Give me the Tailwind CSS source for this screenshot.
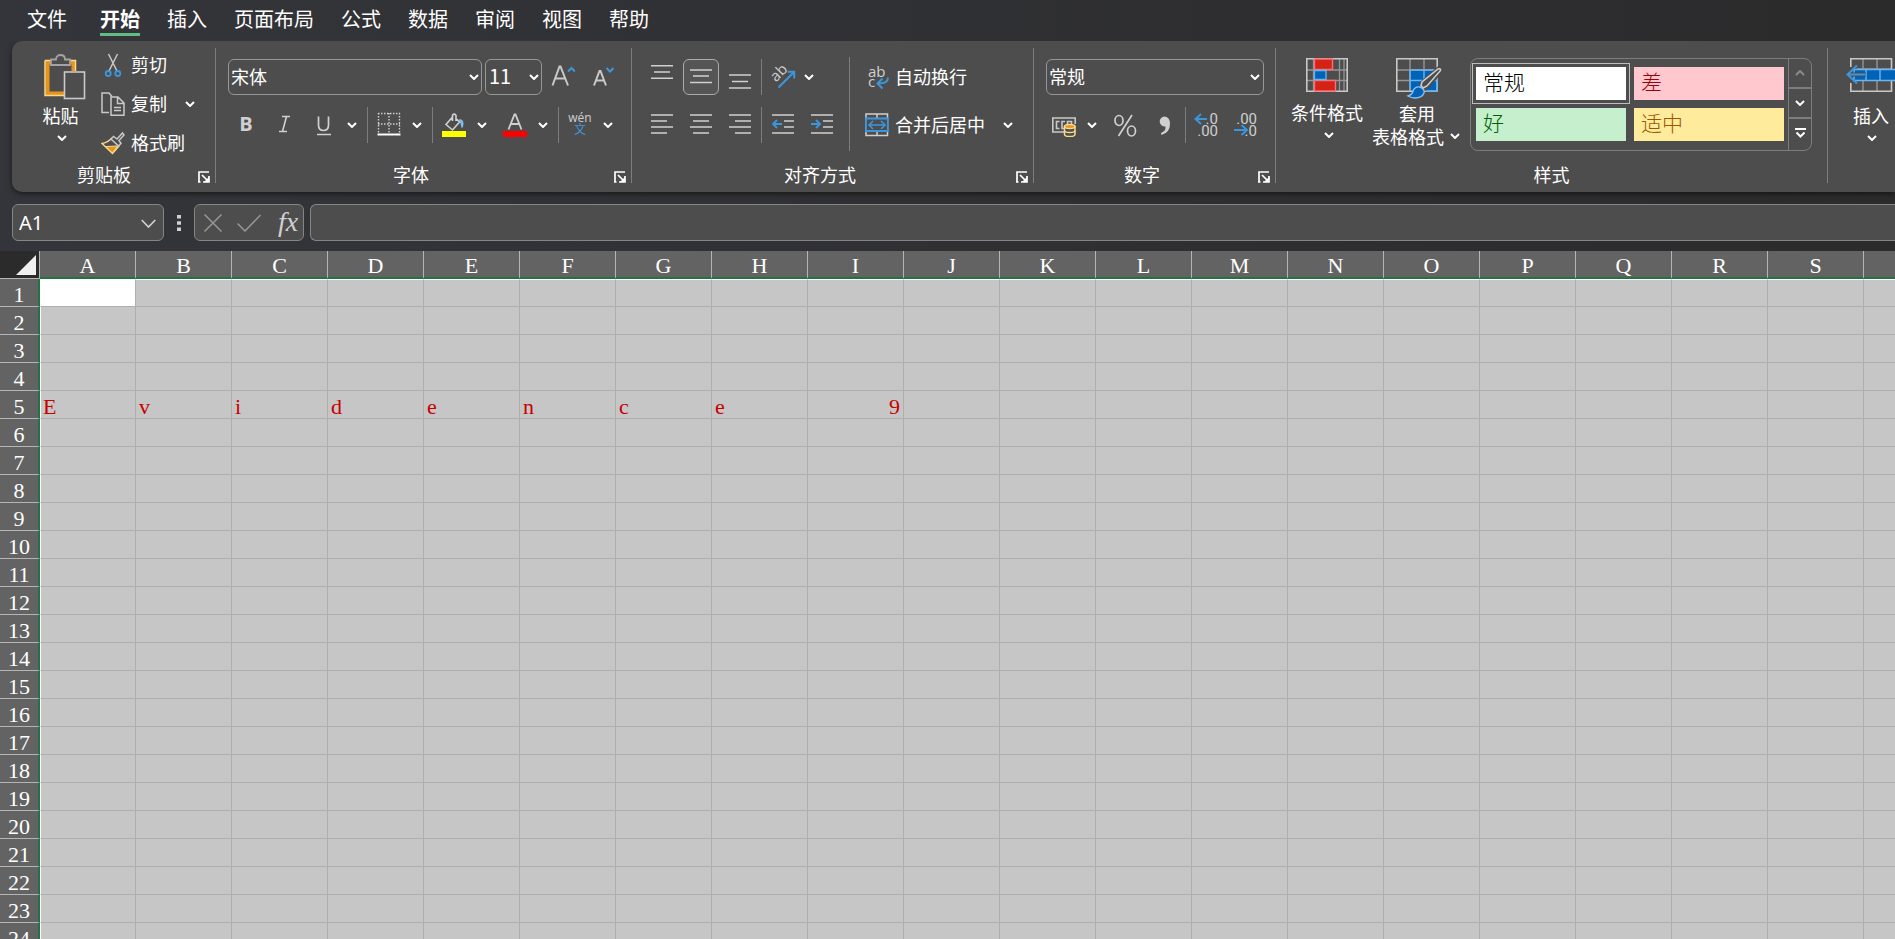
<!DOCTYPE html>
<html lang="zh-CN">
<head>
<meta charset="utf-8">
<title>工作簿</title>
<script src="https://cdn.jsdelivr.net/npm/@tailwindcss/browser@4"></script>
</head>
<body class="h-screen overflow-hidden flex flex-col bg-linear-to-r from-[#34353a] to-[#2b2b2c] text-white text-lg font-['Noto_Sans_CJK_SC',sans-serif]">
<svg class="hidden" aria-hidden="true">
  <symbol id="chev" viewBox="0 0 10 6"><path d="M1 1l4 4 4-4" fill="none" stroke="currentColor" stroke-width="2"/></symbol>
  <symbol id="launch" viewBox="0 0 12 12"><path d="M1 11.5V1H11M0 11h2.500M4 4l6 6M11 5v6H5" fill="none" stroke="#fff" stroke-width="1.700"/><path d="M11 6v5H6z" fill="#fff"/></symbol>
</svg>

<nav class="h-[41px] shrink-0 flex items-start pl-[27px] pt-1 gap-[27px] text-xl leading-[29px] whitespace-nowrap" aria-label="功能区选项卡">
  <a href="#" class="mr-1.5">文件</a>
  <a href="#" class="font-bold h-8 border-b-3 border-[#62bd85]">开始</a>
  <a href="#">插入</a>
  <a href="#">页面布局</a>
  <a href="#">公式</a>
  <a href="#">数据</a>
  <a href="#">审阅</a>
  <a href="#">视图</a>
  <a href="#">帮助</a>
</nav>

<main class="flex flex-col flex-1 min-h-0 overflow-hidden">
<section class="ml-3 shrink-0 flex pt-[7px] pb-[9px] bg-[#4d4d4d] rounded-l-[10px] shadow-[0_2px_5px_rgba(0,0,0,0.5)] whitespace-nowrap leading-[22px]" aria-label="开始">

  <div class="w-[204px] h-[135px] shrink-0 flex flex-col border-r border-[#7d7d7d]">
    <div class="flex-1 flex">
      <button class="w-[65px] ml-4 pt-[6px] mr-2 flex flex-col items-center">
        <svg class="w-[42px] h-[46px] ml-[9px]" viewBox="0 0 42 46" fill="none">
          <path d="M7 8.500H3.500V39.500H20M27 8.500h2.500V17" stroke="#e8931c" stroke-width="4" />
          <path d="M1 6.500V41.500H20M1 6.500H7M26 6.500h5.500V17" stroke="#f9d98c" stroke-width="1.500"/>
          <path d="M7 11V5.500h5C12 2.500 14 1 16.500 1S21 2.500 21 5.500h5V11z" fill="#4d4d4d" stroke="#a3a3a3" stroke-width="1.800"/>
          <rect x="20.500" y="18" width="20" height="26.500" fill="#4d4d4d" stroke="#c9c9c9" stroke-width="1.600"/>
        </svg>
        <span class="mt-1">粘贴</span>
        <svg class="w-2.5 h-1.5 mt-[9px] ml-0.5"><use href="#chev"/></svg>
      </button>
      <div class="flex flex-col gap-[6px]">
        <button class="h-[33px] flex items-center gap-[6px]">
          <svg class="w-6 h-6" viewBox="0 0 24 24" fill="none"><path d="M7.500 1L16 18M16.500 1L8 18" stroke="#c9c9c9" stroke-width="1.500"/><circle cx="7.200" cy="20.500" r="2.500" stroke="#3c96dc" stroke-width="1.800"/><circle cx="16.800" cy="20.500" r="2.500" stroke="#3c96dc" stroke-width="1.800"/></svg>
          <span class="pb-[2px]">剪切</span>
        </button>
        <div class="h-[33px] flex items-center">
          <button class="flex items-center gap-[6px]">
            <svg class="w-6 h-6" viewBox="0 0 24 24" fill="none" stroke="#c9c9c9" stroke-width="1.500"><path d="M8 20.500H1V1h7l3 3.500"/><path d="M10 5h7l6 6v12.200H10zM16.500 5v6.500H23M13 15.500h7M13 18.500h7"/></svg>
            <span class="pb-[2px]">复制</span>
          </button>
          <button class="w-5 h-6 ml-[13px] flex items-center justify-center" aria-label="复制选项"><svg class="w-2.5 h-1.5"><use href="#chev"/></svg></button>
        </div>
        <button class="h-[33px] flex items-center gap-[6px]">
          <svg class="w-6 h-6" viewBox="0 0 24 24" fill="none"><path d="M1 12.500C5 12 8 10 10.500 7.500L18 15l-6.500 7.500z" stroke="#f9d98c" stroke-width="1.400"/><path d="M5 15.500l11.500-.5-5 7z" fill="#e8931c" stroke="#f9d98c"/><path d="M10 8l2.500-2.500 3.500 2.500L21.500 2l1.500 2-5 5.500 2 3-2.500 2.500z" fill="#4d4d4d" stroke="#c9c9c9" stroke-width="1.500"/></svg>
          <span class="pb-[2px]">格式刷</span>
        </button>
      </div>
    </div>
    <div class="h-4 flex items-end"><h2 class="flex-1 pl-[6px] pb-[2px] text-center leading-[14px]">剪贴板</h2><button class="ml-2 mr-[5px]" aria-label="剪贴板设置"><svg class="size-3"><use href="#launch"/></svg></button></div>
  </div>

  <div class="w-[416px] h-[135px] shrink-0 flex flex-col border-r border-[#7d7d7d]">
    <div class="flex-1 flex flex-col gap-3 pt-[11px] pl-3">
      <div class="flex h-9">
        <label class="relative mr-[3px]"><select aria-label="字体" class="appearance-none w-[254px] h-9 border border-[#979797] rounded-md pl-[2px] pb-[2px] leading-8"><option>宋体</option></select><svg class="absolute right-[3px] top-[15px] w-2.5 h-1.5"><use href="#chev"/></svg></label>
        <label class="relative"><select aria-label="字号" class="appearance-none w-[57px] h-9 border border-[#979797] rounded-md pl-[3px] pb-[2px] text-xl leading-8"><option>11</option></select><svg class="absolute right-[3px] top-[15px] w-2.5 h-1.5"><use href="#chev"/></svg></label>
        <button class="w-9 ml-[3px] pb-[3px] flex items-center justify-center" aria-label="增大字号"><svg class="size-6" viewBox="0 0 24 24" fill="none"><path d="M1.500 21.500L8.500 2.500h1L17 21.500M4 14.500h10.500" stroke="#c9c9c9" stroke-width="2"/><path d="M17 7.500l3.500-3.500L24 7.500" stroke="#3c96dc" stroke-width="2"/></svg></button>
        <button class="w-9 ml-[3px] pb-[3px] flex items-center justify-center" aria-label="减小字号"><svg class="size-6" viewBox="0 0 24 24" fill="none"><path d="M4 21.500L9.500 7h1L16 21.500M6 16.500h8" stroke="#c9c9c9" stroke-width="2"/><path d="M16.500 4l3.500 3.500L23.500 4" stroke="#3c96dc" stroke-width="2"/></svg></button>
      </div>
      <div class="flex h-9 items-center text-[#d0d0d0]">
        <button class="w-9 mr-[3px] pb-[3px] text-xl font-bold font-['Open_Sans',sans-serif]" aria-label="加粗">B</button>
        <button class="w-9 mr-[3px] pb-[2px]" aria-label="倾斜"><svg class="size-6 mx-auto" viewBox="0 0 24 24"><path d="M9 4.500h8M6 19.500h8M13.500 4.500l-4 15" fill="none" stroke="#d0d0d0" stroke-width="1.600"/></svg></button>
        <button class="w-9" aria-label="下划线"><svg class="size-6 mx-auto" viewBox="0 0 24 24"><path d="M6.500 3.500v8.500q0 5.500 5 5.500t5-5.500V3.500M5 21.500h14" fill="none" stroke="#d0d0d0" stroke-width="1.700"/></svg></button>
        <button class="w-5 h-9 flex items-center justify-center text-white" aria-label="下划线选项"><svg class="w-2.5 h-1.5"><use href="#chev"/></svg></button>
        <span class="ml-[5px] mr-[3px] w-px h-9 bg-[#7d7d7d]"></span>
        <button class="w-9 pb-[2px]" aria-label="边框"><svg class="size-6 mx-auto" viewBox="0 0 24 24" fill="none"><path d="M1 1.500H23M1 12H23M1.500 1V21M12 1V21M22.500 1V21" stroke="#d0d0d0" stroke-width="1.400" stroke-dasharray="1.500 1.500"/><path d="M.5 22.500h23" stroke="#fff" stroke-width="2"/></svg></button>
        <button class="w-5 h-9 flex items-center justify-center text-white" aria-label="边框选项"><svg class="w-2.5 h-1.5"><use href="#chev"/></svg></button>
        <span class="ml-[5px] mr-[3px] w-px h-9 bg-[#7d7d7d]"></span>
        <button class="w-9" aria-label="填充颜色"><svg class="size-6 mx-auto" viewBox="0 0 24 24" fill="none"><path d="M10.500 4L4 11.500l6.500 5.500 7-8-4-4M10.500 4v-2q2-2 3.500.5V8M10.500 4v4" stroke="#d0d0d0" stroke-width="1.600"/><path d="M16.500 6.500q4.500-1 5 3.500.3 3-1.500 5.500-1.500-3-1.500-5z" fill="#7fb8ea"/><path d="M0 18h24v6H0z" fill="#ff0"/></svg></button>
        <button class="w-5 h-9 flex items-center justify-center text-white" aria-label="填充颜色选项"><svg class="w-2.5 h-1.5"><use href="#chev"/></svg></button>
        <button class="w-9 ml-[5px]" aria-label="字体颜色"><svg class="size-6 mx-auto" viewBox="0 0 24 24" fill="none"><path d="M5.500 16.500L11.500 1.500h1L18.500 16.500M8 11h8.500" stroke="#d0d0d0" stroke-width="1.800"/><path d="M0 18h24v6H0z" fill="red"/></svg></button>
        <button class="w-5 h-9 flex items-center justify-center text-white" aria-label="字体颜色选项"><svg class="w-2.5 h-1.5"><use href="#chev"/></svg></button>
        <span class="ml-[5px] mr-[3px] w-px h-9 bg-[#7d7d7d]"></span>
        <button class="w-9 pb-[2px] flex flex-col items-center text-xs leading-3 font-['Open_Sans','Noto_Sans_CJK_SC',sans-serif]"><span>wén</span><span class="text-[#3c96dc]">文</span></button>
        <button class="w-5 h-9 flex items-center justify-center text-white" aria-label="拼音选项"><svg class="w-2.5 h-1.5"><use href="#chev"/></svg></button>
      </div>
    </div>
    <div class="h-4 flex items-end"><h2 class="flex-1 pb-[2px] text-center leading-[14px]">字体</h2><button class="ml-2 mr-[5px]" aria-label="字体设置"><svg class="size-3"><use href="#launch"/></svg></button></div>
  </div>

  <div class="w-[402px] h-[135px] shrink-0 flex flex-col border-r border-[#7d7d7d]">
    <div class="flex-1 flex pl-3">
      <div class="w-[205px] flex flex-col gap-3 pt-[11px]">
        <div class="flex h-9 items-center gap-[3px]">
          <button class="w-9" aria-label="顶端对齐"><svg class="w-[22px] h-6 mx-auto" viewBox="0 0 22 24"><path d="M0 .8h22M3 7h16M0 13.200h22" stroke="#d0d0d0" stroke-width="1.600"/></svg></button>
          <button class="w-9 h-9 border border-[#ababab] rounded-md bg-[#555]" aria-label="垂直居中" aria-pressed="true"><svg class="w-[22px] h-6 mx-auto" viewBox="0 0 22 24"><path d="M0 5h22M3 11h16M0 17.500h22" stroke="#d0d0d0" stroke-width="1.600"/></svg></button>
          <button class="w-9" aria-label="底端对齐"><svg class="w-[22px] h-6 mx-auto" viewBox="0 0 22 24"><path d="M0 10h22M3 16.500h16M0 23h22" stroke="#d0d0d0" stroke-width="1.600"/></svg></button>
          <span class="w-px h-9 bg-[#7d7d7d]"></span>
          <button class="w-9" aria-label="方向"><svg class="size-6 mx-auto overflow-visible" viewBox="0 0 24 24" fill="none"><text transform="translate(5 17.500) rotate(-45)" font-family="Open Sans" font-size="15" fill="#d0d0d0">ab</text><path d="M7.500 22.500L23 7M16.500 6.800H23.200V13.500" stroke="#3c96dc" stroke-width="2"/></svg></button>
          <button class="w-3 h-9 flex items-center" aria-label="方向选项"><svg class="w-2.5 h-1.5"><use href="#chev"/></svg></button>
        </div>
        <div class="flex h-9 items-center gap-[3px]">
          <button class="w-9 pb-[2px]" aria-label="左对齐"><svg class="w-[22px] h-6 mx-auto" viewBox="0 0 22 24"><path d="M0 3h22M0 9h16M0 15h22M0 21h16" stroke="#d0d0d0" stroke-width="1.600"/></svg></button>
          <button class="w-9 pb-[2px]" aria-label="居中"><svg class="w-[22px] h-6 mx-auto" viewBox="0 0 22 24"><path d="M0 3h22M3 9h16M0 15h22M3 21h16" stroke="#d0d0d0" stroke-width="1.600"/></svg></button>
          <button class="w-9 pb-[2px]" aria-label="右对齐"><svg class="w-[22px] h-6 mx-auto" viewBox="0 0 22 24"><path d="M0 3h22M6 9h16M0 15h22M6 21h16" stroke="#d0d0d0" stroke-width="1.600"/></svg></button>
          <span class="w-px h-9 bg-[#7d7d7d]"></span>
          <button class="w-9 pb-[2px]" aria-label="减少缩进"><svg class="w-[22px] h-6 mx-auto" viewBox="0 0 22 24" fill="none"><path d="M0 3h22M12 9h10M12 15h10M0 21h22" stroke="#d0d0d0" stroke-width="1.600"/><path d="M10 12H1M5 8l-4 4 4 4" stroke="#3c96dc" stroke-width="1.900"/></svg></button>
          <button class="w-9 pb-[2px]" aria-label="增加缩进"><svg class="w-[22px] h-6 mx-auto" viewBox="0 0 22 24" fill="none"><path d="M0 3h22M12 9h10M12 15h10M0 21h22" stroke="#d0d0d0" stroke-width="1.600"/><path d="M0 12h9M5 8l4 4-4 4" stroke="#3c96dc" stroke-width="1.900"/></svg></button>
        </div>
      </div>
      <span class="w-px h-[94px] mt-[9px] bg-[#7d7d7d]"></span>
      <div class="flex flex-col gap-3 pt-[11px] pl-[15px]">
        <button class="flex h-9 items-center gap-[6px]">
          <svg class="size-6 overflow-visible" viewBox="0 0 24 24" fill="none"><text x="3" y="11.500" font-family="Open Sans" font-size="15" fill="#d0d0d0">ab</text><text x="3" y="22" font-family="Open Sans" font-size="15" fill="#d0d0d0">c</text><path d="M23 12.500q0 6-9.500 6M17.500 13.500l-5 5 5 5" stroke="#3c96dc" stroke-width="2"/></svg>
          <span class="pb-[2px]">自动换行</span>
        </button>
        <div class="flex h-9 items-center">
          <button class="flex items-center gap-[6px]">
            <svg class="size-6" viewBox="0 0 24 24" fill="none"><path d="M1 1H22.500V22.500H1zM12 1v5M12 18v5" stroke="#d0d0d0" stroke-width="1.500"/><path d="M1 5.500H22.800V18H1z" fill="#4d4d4d" stroke="#3c96dc" stroke-width="1.800"/><path d="M4 12h16M8 8l-4 4 4 4M16 8l4 4-4 4" stroke="#3c96dc" stroke-width="1.600"/></svg>
            <span class="pb-[2px]">合并后居中</span>
          </button>
          <button class="w-5 h-9 ml-[13px] flex items-center justify-center" aria-label="合并选项"><svg class="w-2.5 h-1.5"><use href="#chev"/></svg></button>
        </div>
      </div>
    </div>
    <div class="h-4 flex items-end"><h2 class="flex-1 pb-[2px] text-center leading-[14px]">对齐方式</h2><button class="ml-2 mr-[5px]" aria-label="对齐设置"><svg class="size-3"><use href="#launch"/></svg></button></div>
  </div>

  <div class="w-[242px] h-[135px] shrink-0 flex flex-col border-r border-[#7d7d7d]">
    <div class="flex-1 flex flex-col gap-3 pt-[11px] pl-3">
      <label class="relative w-[218px] h-9"><select aria-label="数字格式" class="appearance-none w-full h-9 border border-[#979797] rounded-md pl-[2px] pb-[2px] leading-8"><option>常规</option></select><svg class="absolute right-1 top-[15px] w-2.5 h-1.5"><use href="#chev"/></svg></label>
      <div class="flex h-9 items-center">
        <button class="w-9" aria-label="会计数字格式"><svg class="size-6 mx-auto" viewBox="0 0 24 24" fill="none"><path d="M12 19H.8V5H23.200v6" stroke="#c9c9c9" stroke-width="1.600"/><path d="M7.500 8.500H4.500v7h3M13 8.500h-3v7h2M15.500 12V8.500h4V11" stroke="#c9c9c9" stroke-width="1.600"/><path d="M12.500 13.500v8q0 2 5.200 2t5.300-2v-8z" fill="#4d4d4d" stroke="#f9d98c" stroke-width="1.500"/><path d="M12.500 17.500q0 2 5.200 2t5.300-2" stroke="#f9d98c" stroke-width="1.500"/><ellipse cx="17.750" cy="13.500" rx="5.250" ry="2" fill="#e8931c" stroke="#f9d98c" stroke-width="1.400"/></svg></button>
        <button class="w-5 h-9 flex items-center justify-center" aria-label="会计格式选项"><svg class="w-2.5 h-1.5"><use href="#chev"/></svg></button>
        <button class="w-9 ml-[5px]" aria-label="百分比"><svg class="size-6 mx-auto" viewBox="0 0 24 24" fill="none" stroke="#d0d0d0" stroke-width="1.700"><ellipse cx="6" cy="7.500" rx="4" ry="5"/><ellipse cx="18.500" cy="18" rx="4" ry="5"/><path d="M19 2L5.500 23"/></svg></button>
        <button class="w-9 ml-[3px]" aria-label="千位分隔"><svg class="size-6 mx-auto" viewBox="0 0 24 24"><path d="M12 3.500q6 0 6 7.500 0 8.500-8.500 11l-.5-2q5-2 4.500-6.500a5 5 0 1 1-1.500-10z" fill="#d0d0d0"/></svg></button>
        <span class="mx-[3px] w-px h-9 bg-[#7d7d7d]"></span>
        <button class="w-9 pb-[2px]" aria-label="增加小数位数"><svg class="size-6 mx-auto overflow-visible" viewBox="0 0 24 24" fill="none"><g font-family="Roboto" font-size="15" fill="#d0d0d0"><text x="23" y="11.500" text-anchor="end">.0</text><text x="23" y="23.500" text-anchor="end">.00</text></g><path d="M12 7H.5M6 2L.5 7l5.500 5" stroke="#3c96dc" stroke-width="1.900"/></svg></button>
        <button class="w-9 ml-[3px] pb-[2px]" aria-label="减少小数位数"><svg class="size-6 mx-auto overflow-visible" viewBox="0 0 24 24" fill="none"><g font-family="Roboto" font-size="15" fill="#d0d0d0"><text x="23" y="11.500" text-anchor="end">.00</text><text x="23" y="23.500" text-anchor="end">.0</text></g><path d="M0 18H12.500M7.500 13l5.500 5-5.500 5" stroke="#3c96dc" stroke-width="1.900"/></svg></button>
      </div>
    </div>
    <div class="h-4 flex items-end"><h2 class="flex-1 pb-[2px] text-center leading-[14px]">数字</h2><button class="ml-2 mr-[5px]" aria-label="数字设置"><svg class="size-3"><use href="#launch"/></svg></button></div>
  </div>

  <div class="w-[552px] h-[135px] shrink-0 flex flex-col border-r border-[#7d7d7d]">
    <div class="flex-1 flex pt-[10px]">
      <button class="w-[72px] ml-[15px] flex flex-col items-center self-start">
        <svg class="w-[42px] h-[34px]" viewBox="0 0 42 34" fill="none"><path d="M7.500 1v32M33.500 1v32M38 1v32M1 12h40M1 22.500h40" stroke="#959595" stroke-width="1.300"/><path d="M.8.800H41.200V33.200H.8z" stroke="#c9c9c9" stroke-width="1.600"/><path d="M8.500 1H26.500V11.500H8.500zM8.500 22.500H29.500V33H8.500z" fill="#d42314" stroke="#f4707a" stroke-width="1.400"/><path d="M8.500 12.500H20V21.500H8.500z" fill="#0063b8" stroke="#6fb3ee" stroke-width="1.300"/></svg>
        <span class="mt-[9px]">条件格式</span>
        <svg class="w-2.5 h-1.5 mt-[9px] ml-1"><use href="#chev"/></svg>
      </button>
      <button class="ml-[9px] w-[89px] flex flex-col items-start self-start">
        <svg class="w-[46px] h-[41px] ml-6" viewBox="0 0 46 41" fill="none"><path d="M14 12H41V33H14z" fill="#0063b8"/><path d="M14 1v32M28 1v11M1 12h40M1 22.500h13" stroke="#959595" stroke-width="1.400"/><path d="M.8.800H41.200V33.200H.8z" stroke="#c9c9c9" stroke-width="1.600"/><path d="M14 33V12h27.200v21.200H30M28 12v12M14 22.500h27" stroke="#6fb3ee" stroke-width="1.400"/><path d="M43 10q3 0 2 3L31 29q-3 4-6 1-1-3 2-6z" fill="#4d4d4d" stroke="#4d4d4d" stroke-width="4"/><path d="M42 11q3-1 2.500 1.500L31 28l-4 2-2-2.500 1-3.500z" fill="#4d4d4d" stroke="#d0d0d0" stroke-width="1.500"/><path d="M12 38q4-1 5-5 2-5 7-4 5 2 4 6-2 5-9 5-4 0-7-2z" fill="#0063b8" stroke="#8cc2ee" stroke-width="1.400"/></svg>
        <span class="ml-[27px] mt-[3px]">套用</span>
        <span class="flex items-center gap-[6px] leading-6">表格格式<svg class="w-2.5 h-1.5"><use href="#chev"/></svg></span>
      </button>
      <div class="ml-[9px] w-[342px] h-[93px] flex border border-[#7d7d7d] rounded-lg" aria-label="单元格样式">
        <div class="grid grid-cols-[150px_150px] grid-rows-[33px_33px] gap-2 pl-[5px] pr-1 pt-2 text-[21px] leading-7 font-light text-left">
          <button class="bg-white text-black pl-[7px] pb-[5px] text-left outline-1 outline-offset-3 outline-[#bdbdbd]">常规</button>
          <button class="bg-[#ffc7ce] text-[#9c0006] pl-[7px] pb-[5px] text-left">差</button>
          <button class="bg-[#c6efce] text-[#006100] pl-[7px] pb-[5px] text-left">好</button>
          <button class="bg-[#ffeb9c] text-[#9c5700] pl-[7px] pb-[5px] text-left">适中</button>
        </div>
        <div class="flex-1 flex flex-col border-l border-[#7d7d7d]">
          <button class="flex-1 flex items-center justify-center text-[#8a8a8a] border-b-2 border-[#7d7d7d]" aria-label="上一行"><svg class="w-2.5 h-1.5 rotate-180"><use href="#chev"/></svg></button>
          <button class="flex-1 flex items-center justify-center border-b-2 border-[#7d7d7d]" aria-label="下一行"><svg class="w-2.5 h-1.5"><use href="#chev"/></svg></button>
          <button class="flex-1 pb-[3px] flex items-center justify-center" aria-label="更多样式"><svg class="w-[11px] h-[10px]" viewBox="0 0 11 10"><path d="M0 1h11M1.500 4.500l4 4 4-4" fill="none" stroke="#fff" stroke-width="2"/></svg></button>
        </div>
      </div>
    </div>
    <div class="h-4"><h2 class="text-center leading-[14px]">样式</h2></div>
  </div>

  <div class="flex-1 min-w-0 h-[135px] overflow-hidden">
    <button class="w-[86px] pt-[10px] flex flex-col items-center">
      <svg class="w-[50px] h-[34px]" viewBox="0 0 50 34" fill="none"><path d="M17 1v32M31 1v32M3 11h42" stroke="#959595" stroke-width="1.400"/><path d="M4.800.800H45.500V33.200H4.800z" stroke="#c9c9c9" stroke-width="1.600"/><path d="M3 9h8v16H3z" fill="#4d4d4d"/><path d="M8 11.500H50V22.500H8z" fill="#0063b8" stroke="#6fb3ee" stroke-width="1.400"/><path d="M20 11v11M34 11v11" stroke="#6fb3ee" stroke-width="1.400"/><path d="M20 16.500H3" stroke="#4d4d4d" stroke-width="4"/><path d="M20 16.500H2M11 7.500l-9.500 9L11 25.500" stroke="#3c96dc" stroke-width="2"/></svg>
      <span class="mt-3">插入</span>
      <svg class="w-2.5 h-1.5 mt-[9px] ml-0.5"><use href="#chev"/></svg>
    </button>
  </div>
</section>

<section class="shrink-0 flex items-center pl-3 pt-3 pb-[10px]" aria-label="编辑栏">
  <label class="relative"><input aria-label="名称框" value="A1" class="w-[152px] h-[37px] block bg-[#4d4d4d] border border-[#858585] rounded-md pl-[6px] pb-px text-xl font-['Noto_Sans',sans-serif]"><svg class="absolute right-2 top-[15px] w-[15px] h-[9px]" viewBox="0 0 15 9"><path d="M.7 1l6.800 7 6.800-7" fill="none" stroke="#d0d0d0" stroke-width="1.700"/></svg></label>
  <svg class="w-1 h-4 ml-[13px] mr-[13px]" viewBox="0 0 4 16"><path d="M0 0h4v3.500H0zM0 6.200h4v3.500H0zM0 12.500h4V16H0z" fill="#d0d0d0"/></svg>
  <div class="w-[110px] h-[37px] flex items-center pl-[9px] bg-[#4d4d4d] border border-[#858585] rounded-md">
    <button aria-label="取消"><svg class="w-[18px] h-[18px]" viewBox="0 0 18 18"><path d="M.5.500l17 17M17.500.500l-17 17" stroke="#979797" stroke-width="1.500"/></svg></button>
    <button class="ml-[15px]" aria-label="输入"><svg class="w-6 h-[18px]" viewBox="0 0 24 18"><path d="M.5 9.500l7.500 7.500L23.500 1" fill="none" stroke="#979797" stroke-width="1.500"/></svg></button>
    <button aria-label="插入函数" class="w-6 ml-[15px] pb-[2px] text-[28px] leading-8 italic text-[#d0d0d0] font-['Liberation_Serif',serif]">fx</button>
  </div>
  <input aria-label="公式" class="flex-1 min-w-0 h-[37px] ml-[6px] pl-2 bg-[#4d4d4d] border border-r-0 border-[#858585] rounded-l-md">
</section>

<div class="flex-1 min-h-0 overflow-hidden bg-[#c6c6c6] font-['Liberation_Serif','Noto_Sans_CJK_SC',serif] text-[22px] leading-[23px]">
  <table class="w-max table-fixed border-separate border-spacing-0">
    <thead><tr id="cols" class="h-7">
      <th class="w-10 min-w-10 h-7 p-0 bg-[#2b2b2b] border-b border-r border-[#b5b5b5]"><svg class="w-5 h-5 ml-4" viewBox="0 0 20 20"><path d="M20 0v20H0z" fill="#f0f0f0"/></svg></th>
    </tr></thead>
    <tbody id="rows"></tbody>
  </table>
</div>
</main>

<script>
  const letters = 'ABCDEFGHIJKLMNOPQRST'.split('');
  const data = { 5: ['E', 'v', 'i', 'd', 'e', 'n', 'c', 'e', '9'] };
  document.getElementById('cols').insertAdjacentHTML('beforeend', letters.map(l =>
    `<th scope="col" class="w-24 min-w-24 h-7 p-0 pt-[3px] font-normal bg-[#636363] border-r border-r-[#b5b5b5] border-b-2 border-b-[#217346]">${l}</th>`).join(''));
  let html = '';
  for (let r = 1; r <= 24; r++) {
    html += `<tr class="h-7"><th scope="row" class="h-7 p-0 pt-1 font-normal bg-[#636363] border-b border-b-[#b5b5b5] border-r-2 border-r-[#217346]">${r}</th>`;
    letters.forEach((l, c) => {
      const v = (data[r] || [])[c] || '';
      const fill = r === 1 && c === 0 ? 'bg-white' : 'bg-[#c6c6c6]';
      const top = r === 1 ? 'border-t border-t-white' : '';
      const left = c === 0 ? 'border-l border-l-white pl-[2px]' : 'pl-[3px]';
      const align = /^\d+$/.test(v) ? 'text-right' : 'text-left';
      html += `<td class="h-7 p-0 pt-1 pr-[3px] text-[#c80000] border-r border-r-[#afafaf] border-b border-b-[#afafaf] ${fill} ${top} ${left} ${align}">${v}</td>`;
    });
    html += '</tr>';
  }
  document.getElementById('rows').innerHTML = html;
</script>
</body>
</html>
